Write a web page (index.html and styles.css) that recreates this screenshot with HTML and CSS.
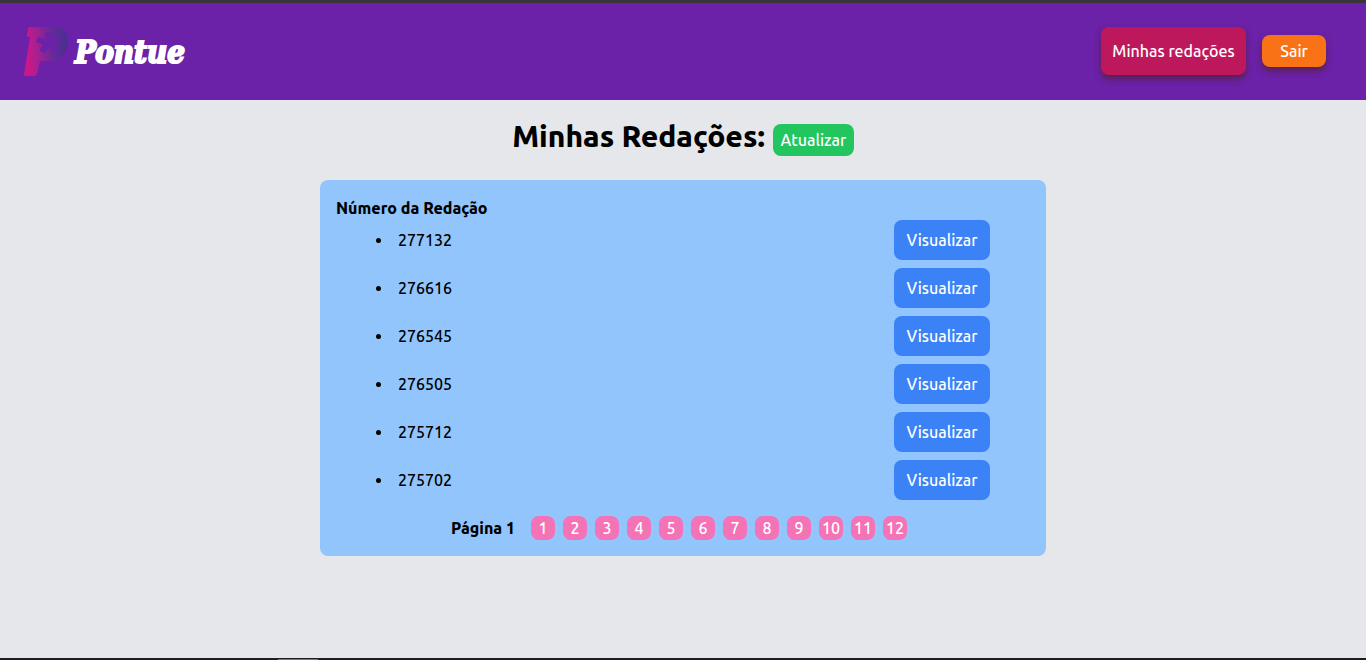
FILE: index.html
```html
<!DOCTYPE html>
<html lang="pt-BR">
<head>
  <meta charset="utf-8">
  <title>Pontue - Minhas Redações</title>
  <link rel="stylesheet" href="styles.css">
</head>
<body>
  <header class="header">
    <div class="logo">
      <svg class="logo-mark" width="44" height="49" viewBox="0 0 44 49" aria-hidden="true">
        <defs>
          <linearGradient id="mark" x1="0" y1="0.55" x2="1" y2="0.45">
            <stop offset="0.08" stop-color="#c9188b"/>
            <stop offset="0.3" stop-color="#a8208f"/>
            <stop offset="0.52" stop-color="#7d2796"/>
            <stop offset="0.76" stop-color="#592d95"/>
            <stop offset="1" stop-color="#493092"/>
          </linearGradient>
        </defs>
        <path fill="url(#mark)" d="M5 0H30C39 0 44 5 44 13C44 26 37 34 25 34H16L13 47Q12.500 49 11 49H1.500Q0 49 0 47.500L6 10H4Q2.500 10 3 8L4 1.500Q4.200 0 5 0Z"/>
        <path fill="none" stroke="#6b21a8" stroke-width="6" d="M24.500 5.500V16L35.500 12.500M24.500 16L13 12.500M24.500 15L18 25M24.500 15L31 25"/>
      </svg>
      <span class="logo-text">Pontue</span>
    </div>
    <nav class="nav">
      <button class="button nav-essays" type="button">Minhas redações</button>
      <button class="button nav-exit" type="button">Sair</button>
    </nav>
  </header>
  <main class="main">
    <div class="heading">
      <h1 class="title">Minhas Redações:</h1>
      <button class="button refresh" type="button">Atualizar</button>
    </div>
    <section class="card">
      <h2 class="card-title">Número da Redação</h2>
      <ul class="essays">
        <li class="essay"><span class="number">277132</span><button class="button view" type="button">Visualizar</button></li>
        <li class="essay"><span class="number">276616</span><button class="button view" type="button">Visualizar</button></li>
        <li class="essay"><span class="number">276545</span><button class="button view" type="button">Visualizar</button></li>
        <li class="essay"><span class="number">276505</span><button class="button view" type="button">Visualizar</button></li>
        <li class="essay"><span class="number">275712</span><button class="button view" type="button">Visualizar</button></li>
        <li class="essay"><span class="number">275702</span><button class="button view" type="button">Visualizar</button></li>
      </ul>
      <nav class="pages" aria-label="Páginas">
        <strong class="current">Página 1</strong>
        <button class="button page" type="button">1</button>
        <button class="button page" type="button">2</button>
        <button class="button page" type="button">3</button>
        <button class="button page" type="button">4</button>
        <button class="button page" type="button">5</button>
        <button class="button page" type="button">6</button>
        <button class="button page" type="button">7</button>
        <button class="button page" type="button">8</button>
        <button class="button page" type="button">9</button>
        <button class="button page" type="button">10</button>
        <button class="button page" type="button">11</button>
        <button class="button page" type="button">12</button>
      </nav>
    </section>
  </main>
  <footer class="edge"><div class="edge-thumb"></div></footer>
</body>
</html>
```
FILE: styles.css
```css
* {
  box-sizing: border-box;
}

body {
  display: flex;
  flex-direction: column;
  min-height: 100vh;
  margin: 0;
  background: #e5e7eb;
  color: #000;
  font: 470 16px/24px Ubuntu, "Noto Sans", sans-serif;
}

.header {
  display: flex;
  align-items: flex-start;
  justify-content: space-between;
  padding: 24px 40px 24px 24px;
  border-top: 3px solid #373539;
  background: #6b21a8;
}

.logo {
  display: flex;
  align-items: center;
  gap: 7px;
}

.logo-mark {
  display: block;
}

.logo-text {
  color: #fff;
  font: italic 700 31px/48px "DejaVu Serif Condensed", "DejaVu Serif", serif;
  -webkit-text-stroke: 2px #fff;
}

.nav {
  display: flex;
  align-items: center;
  gap: 16px;
}

.button {
  padding: 0;
  border: 0;
  border-radius: 8px;
  color: #fff;
  font: inherit;
  white-space: nowrap;
  cursor: pointer;
}

.nav-essays {
  min-width: 145px;
  height: 48px;
  background: #be185d;
  box-shadow: 0 4px 6px rgba(75, 35, 20, 0.6);
}

.nav-exit {
  width: 64px;
  height: 32px;
  background: #f97316;
  box-shadow: 0 4px 6px rgba(75, 35, 20, 0.6);
}

.main {
  flex: 1;
  padding: 16px;
}

.heading {
  display: flex;
  align-items: flex-end;
  justify-content: center;
  gap: 8px;
  height: 40px;
}

.title {
  margin: 0;
  font-size: 30px;
  font-weight: 800;
  line-height: 40px;
}

.refresh {
  min-width: 81px;
  height: 32px;
  background: #22c55e;
}

.card {
  max-width: 726px;
  margin: 24px auto 0;
  padding: 16px;
  border-radius: 8px;
  background: #93c5fd;
}

.card-title {
  margin: 0;
  font-size: 16px;
  font-weight: 800;
}

.essays {
  display: grid;
  gap: 8px;
  margin: 0;
  padding: 0 40px;
  list-style: none;
}

.essay {
  display: flex;
  align-items: center;
}

.essay::before {
  width: 5px;
  height: 5px;
  margin-right: 17px;
  border-radius: 50%;
  background: #000;
  content: "";
}

.view {
  width: 96px;
  height: 40px;
  margin-left: auto;
  background: #3b82f6;
}

.pages {
  display: flex;
  justify-content: center;
  gap: 8px;
  margin-top: 16px;
  padding-right: 8px;
}

.current {
  margin-right: 8px;
  font-weight: 800;
}

.page {
  width: 24px;
  height: 24px;
  background: #f472b6;
}

.edge {
  height: 2px;
  padding-top: 1px;
  background: #1f1d22;
}

.edge-thumb {
  width: 40px;
  height: 1px;
  margin-left: 278px;
  background: #777;
}
```
